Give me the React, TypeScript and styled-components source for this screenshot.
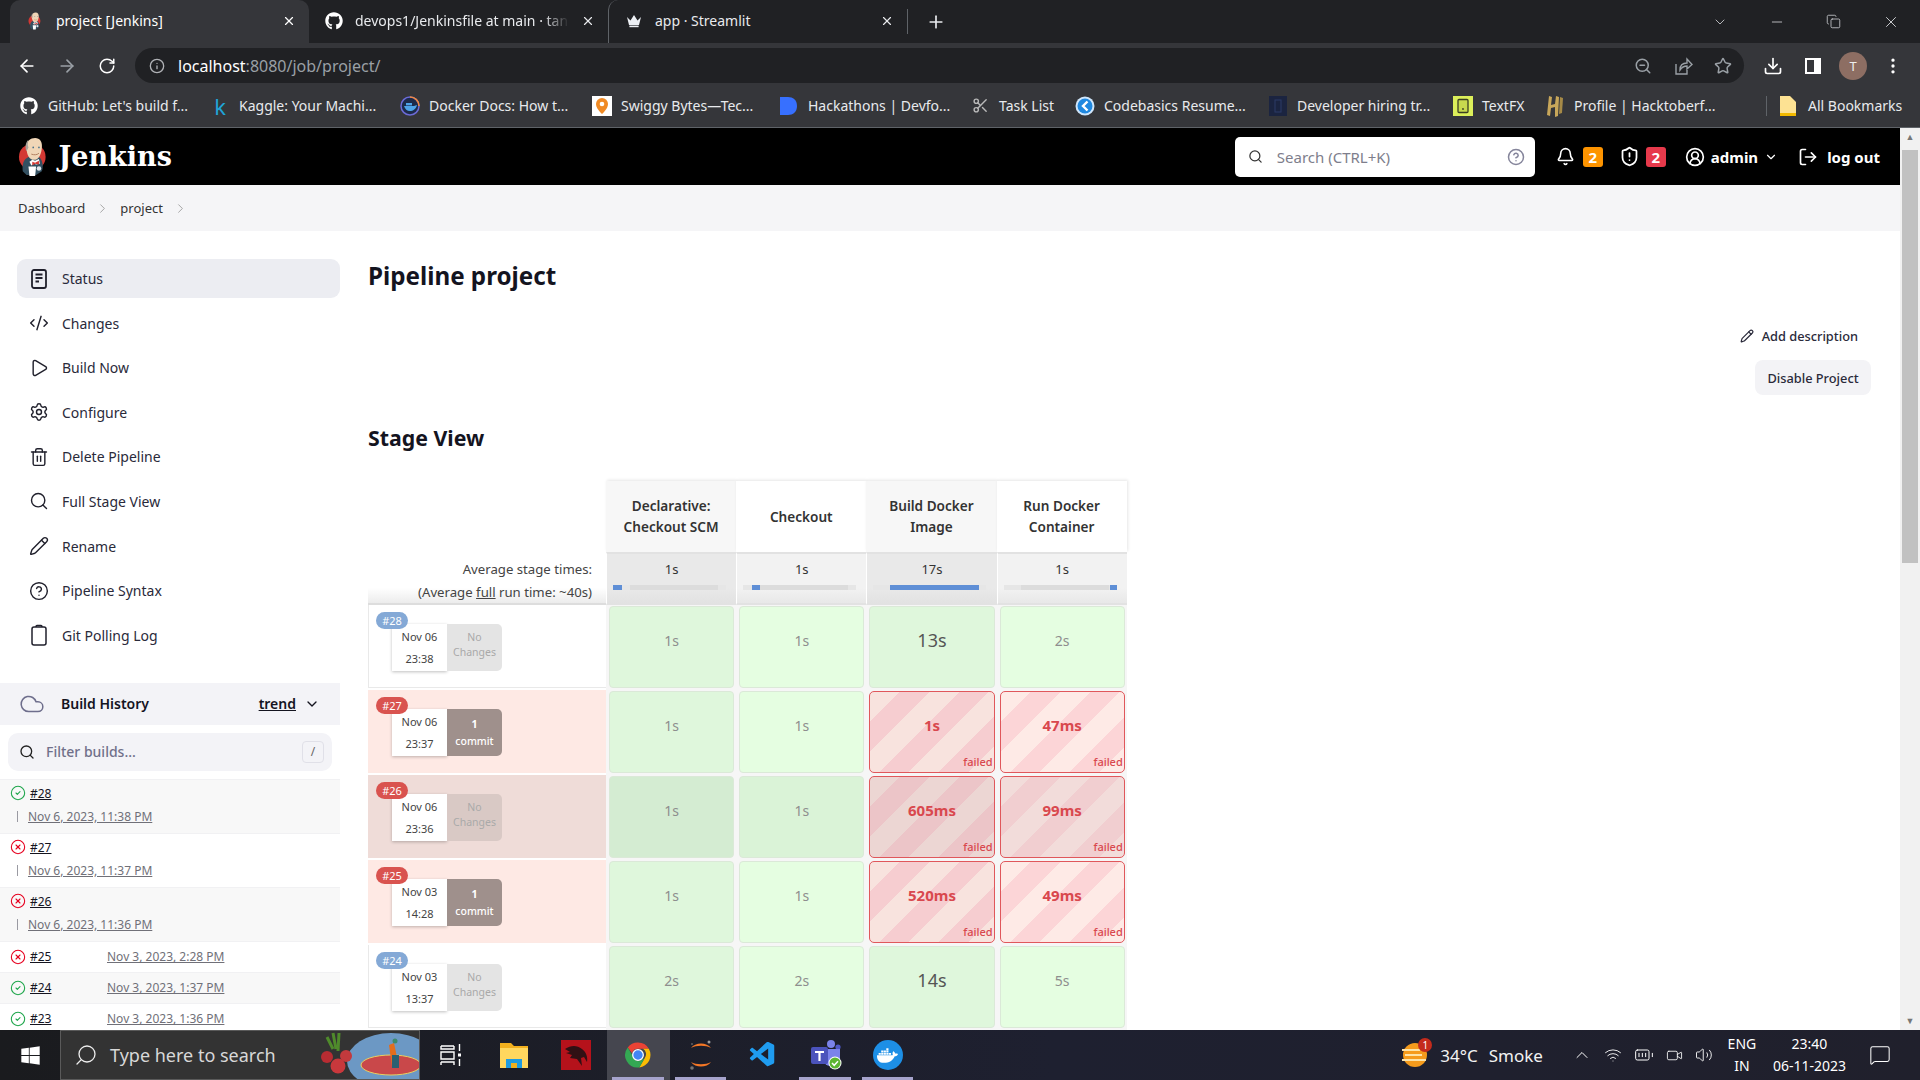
import * as React from 'react';
import styled, { createGlobalStyle } from 'styled-components';
import {
	ArrowLeft,
	ArrowRight,
	Bell,
	BatteryFull,
	ChevronDown,
	ChevronRight,
	ChevronUp,
	CircleCheck,
	CircleHelp,
	CircleUserRound,
	CircleX,
	Cloud,
	CodeXml,
	Download,
	EllipsisVertical,
	Info,
	LogOut,
	MessageSquare,
	Minus,
	Pencil,
	Play,
	Plus,
	RotateCw,
	Scissors,
	Search,
	Settings,
	ShieldAlert,
	Star,
	Trash2,
	Video,
	Volume2,
	Wifi,
	X,
	ZoomOut,
	Copy,
} from 'lucide-react';
import { FaDocker, FaGithub, FaWindows } from 'react-icons/fa';
import { VscVscode } from 'react-icons/vsc';

const bookmarks = [
	{ w: 191, label: "GitHub: Let's build f...", icon: <FaGithub size={18} color='#fff' /> },
	{ w: 190, label: 'Kaggle: Your Machi...', icon: <KaggleIcon /> },
	{ w: 192, label: 'Docker Docs: How t...', icon: <DockerDocsIcon /> },
	{ w: 187, label: 'Swiggy Bytes—Tec...', icon: <SwiggyIcon /> },
	{ w: 191, label: 'Hackathons | Devfo...', icon: <DevfolioIcon /> },
	{ w: 105, label: 'Task List', icon: <Scissors size={17} color='#b9b9b9' /> },
	{ w: 193, label: 'Codebasics Resume...', icon: <CodebasicsIcon /> },
	{ w: 185, label: 'Developer hiring tr...', icon: <DevHiringIcon /> },
	{ w: 92, label: 'TextFX', icon: <TextFxIcon /> },
	{ w: 195, label: 'Profile | Hacktoberf...', icon: <HacktoberIcon /> },
];

const tasks = [
	{ label: 'Status', icon: <StatusDocIcon />, active: true },
	{ label: 'Changes', icon: <CodeXml size={20} strokeWidth={1.7} /> },
	{ label: 'Build Now', icon: <Play size={20} strokeWidth={1.7} /> },
	{ label: 'Configure', icon: <Settings size={20} strokeWidth={1.7} /> },
	{ label: 'Delete Pipeline', icon: <Trash2 size={20} strokeWidth={1.7} /> },
	{ label: 'Full Stage View', icon: <Search size={20} strokeWidth={1.7} /> },
	{ label: 'Rename', icon: <Pencil size={20} strokeWidth={1.7} /> },
	{ label: 'Pipeline Syntax', icon: <CircleHelp size={20} strokeWidth={1.7} /> },
	{ label: 'Git Polling Log', icon: <PollingLogIcon /> },
];

const history = [
	{ id: '#28', date: 'Nov 6, 2023, 11:38 PM', ok: true, wide: true },
	{ id: '#27', date: 'Nov 6, 2023, 11:37 PM', ok: false, wide: true },
	{ id: '#26', date: 'Nov 6, 2023, 11:36 PM', ok: false, wide: true },
	{ id: '#25', date: 'Nov 3, 2023, 2:28 PM', ok: false, wide: false },
	{ id: '#24', date: 'Nov 3, 2023, 1:37 PM', ok: true, wide: false },
	{ id: '#23', date: 'Nov 3, 2023, 1:36 PM', ok: true, wide: false },
];

const stages = [
	{ title: 'Declarative: Checkout SCM', avg: '1s', start: 0, fill: 9 },
	{ title: 'Checkout', avg: '1s', start: 9, fill: 8 },
	{ title: 'Build Docker Image', avg: '17s', start: 17, fill: 89 },
	{ title: 'Run Docker Container', avg: '1s', start: 106, fill: 7 },
];

const runs = [
	{ id: '#28', day: 'Nov 06', time: '23:38', commits: 0, failed: false, hover: false, cells: ['1s', '1s', '13s', '2s'] },
	{ id: '#27', day: 'Nov 06', time: '23:37', commits: 1, failed: true, hover: false, cells: ['1s', '1s', '1s', '47ms'] },
	{ id: '#26', day: 'Nov 06', time: '23:36', commits: 0, failed: true, hover: true, cells: ['1s', '1s', '605ms', '99ms'] },
	{ id: '#25', day: 'Nov 03', time: '14:28', commits: 1, failed: true, hover: false, cells: ['1s', '1s', '520ms', '49ms'] },
	{ id: '#24', day: 'Nov 03', time: '13:37', commits: 0, failed: false, hover: false, cells: ['2s', '2s', '14s', '5s'] },
];

function KaggleIcon() {
	return <KaggleMark>k</KaggleMark>;
}

function JenkinsLogo({ size = 40 }: { size?: number }) {
	return (
		<svg width={(size * 32) / 42} height={size} viewBox='0 0 32 42'>
			<circle cx='15' cy='21' r='14' fill='#d33833' />
			<path d='M5 36c-1-7 1-13 6-15l11 0c4 3 5 10 3 15l-6 4H9z' fill='#335061' />
			<path d='M9 11C9 4 13 1 18 1c5 0 8 4 7 11-1 8-4 12-8 12-5 0-8-5-8-13z' fill='#f0d6b7' />
			<path d='M9 15C7 12 8 5 11 3c-1 3-1 6 0 8z' fill='#a9a39a' />
			<path d='M15 24l3 1 4-2 1 5-4 1-2-1-3 2-2-4z' fill='#fff' />
			<path d='M15 26l3 1 4-2v4l-4-1-3 2z' fill='#d33833' />
			<path d='M11 31h8l-1 10h-6z' fill='#fff' />
			<circle cx='22' cy='33' r='2.4' fill='#dfe5ea' />
			<circle cx='16' cy='11' r='0.9' fill='#49728b' />
			<circle cx='22' cy='11' r='0.9' fill='#49728b' />
			<path d='M14 18c3 1 6 1 8-1' fill='none' stroke='#b07c5c' />
		</svg>
	);
}

function ChromeLogo() {
	return (
		<svg width='30' height='30' viewBox='0 0 48 48'>
			<path d='M24 4a20 20 0 0 1 17.3 10H24a10 10 0 0 0-9.5 7L7.6 11.8A20 20 0 0 1 24 4z' fill='#ea4335' />
			<path d='M41.3 14A20 20 0 0 1 26 43.9L34.6 29A10 10 0 0 0 32 14z' fill='#fbbc04' />
			<path d='M26 43.9A20 20 0 0 1 7.6 11.8L16 26.5A10 10 0 0 0 26 33.9L34.6 29z' fill='#34a853' />
			<circle cx='24' cy='24' r='8.5' fill='#4285f4' stroke='#fff' strokeWidth='2' />
		</svg>
	);
}

function ExplorerLogo() {
	return (
		<svg width='28' height='30' viewBox='0 0 28 30'>
			<path d='M0 3h11l3 3h14v20H0z' fill='#f2b01e' />
			<rect y='8' width='28' height='20' fill='#ffd75e' />
			<path d='M6 28V19h16v9h-5v-5h-6v5z' fill='#1f9be0' />
			<rect x='11' y='23' width='6' height='5' fill='#f2b01e' />
		</svg>
	);
}

function KaliLogo() {
	return (
		<svg width='30' height='30' viewBox='0 0 30 30'>
			<rect width='30' height='30' fill='#b5121b' />
			<path d='M4 9c6-4 12-4 17 0 4 3 6 8 5 13l-3-5-3 1 1 8-5-7-7-1 2-3-6-2 4-1z' fill='#301014' />
		</svg>
	);
}

function JupyterLogo() {
	return (
		<svg width='28' height='32' viewBox='0 0 28 32'>
			<path d='M4 9c4-6 16-6 20 0-5-3-15-3-20 0zM4 23c4 6 16 6 20 0-5 3-15 3-20 0z' fill='#f37726' />
			<circle cx='22' cy='3' r='1.5' fill='#9e9e9e' />
			<circle cx='5' cy='29' r='1.8' fill='#757575' />
			<circle cx='5' cy='5' r='1' fill='#616161' />
		</svg>
	);
}

function TeamsLogo() {
	return (
		<svg width='32' height='30' viewBox='0 0 32 30'>
			<circle cx='21' cy='4' r='4' fill='#7b83eb' />
			<circle cx='28' cy='7' r='2.6' fill='#5059c9' />
			<path d='M14 9h16v11a6 6 0 0 1-6 6h-4a6 6 0 0 1-6-6z' fill='#7b83eb' />
			<rect x='1' y='7' width='17' height='17' rx='2' fill='#4b53bc' />
			<path d='M5 11h9v2h-3.4v8H8.4v-8H5z' fill='#fff' />
			<circle cx='25' cy='23' r='6.5' fill='#fff' />
			<circle cx='25' cy='23' r='5.5' fill='#5cb531' />
			<path d='M22 23l2.2 2.3 3.8-4' fill='none' stroke='#fff' strokeWidth='1.5' />
		</svg>
	);
}

function TaskViewIcon() {
	return (
		<svg width='24' height='24' viewBox='0 0 24 24' fill='none' stroke='#fff' strokeWidth='1.4'>
			<path d='M2 3h13M15 3v3H2V3M2 9h13v7H2zM2 19h13v3M2 19v3' />
			<rect x='19' y='10.5' width='3' height='3' fill='#fff' stroke='none' />
			<path d='M20.5 1v7M20.5 16v7' />
		</svg>
	);
}

function StreamlitCrown() {
	return (
		<svg width='16' height='14' viewBox='0 0 16 14'>
			<path d='M1 3l3.5 3.5L8 1l3.5 5.5L15 3l-2 8H3z' fill='#eceff4' />
			<rect x='3.4' y='11.6' width='9.2' height='1.6' fill='#eceff4' />
		</svg>
	);
}

function ShareIcon() {
	return (
		<svg width='20' height='20' viewBox='0 0 20 20' fill='none' stroke='#9aa0a6' strokeWidth='1.4'>
			<path d='M3 8v10h11v-4' />
			<path d='M7 14c0-5 3-7 7-7V3l5 5.5L14 13V10c-3 0-5 1-7 4z' />
		</svg>
	);
}

function SidePanelIcon() {
	return (
		<svg width='18' height='18' viewBox='0 0 18 18'>
			<rect x='1' y='1' width='16' height='16' fill='#fff' />
			<rect x='3' y='3' width='7' height='12' fill='#35363a' />
		</svg>
	);
}

function StatusDocIcon() {
	return (
		<svg width='20' height='22' viewBox='0 0 20 22' fill='none' stroke='#20202c' strokeWidth='1.8'>
			<rect x='3' y='2' width='14' height='18' rx='2' />
			<path d='M6.5 6.5h7M6.5 10h7M6.5 13.5h3.5' />
		</svg>
	);
}

function PollingLogIcon() {
	return (
		<svg width='20' height='22' viewBox='0 0 20 22' fill='none' stroke='#20202c' strokeWidth='1.5'>
			<rect x='3' y='3' width='14' height='18' rx='2' />
			<path d='M7 3c0-1 .5-1.5 1-1.5h4c.5 0 1 .5 1 1.5' />
		</svg>
	);
}

function DockerDocsIcon() {
	return (
		<svg width='20' height='20' viewBox='0 0 20 20'>
			<circle cx='10' cy='10' r='9' fill='#1d2a4a' stroke='#6b6bd6' strokeWidth='1.5' />
			<path d='M10 1a9 9 0 0 1 9 9' fill='none' stroke='#f0883e' strokeWidth='1.5' />
			<path d='M4 10h10c1 0 2-1 3-1-1 4-4 6-7 6-3 0-5-2-6-5z' fill='#4ea3e8' />
			<rect x='6' y='7' width='6' height='2.4' fill='#4ea3e8' />
		</svg>
	);
}

function SwiggyIcon() {
	return (
		<svg width='20' height='20' viewBox='0 0 20 20'>
			<rect width='20' height='20' fill='#fff' />
			<path d='M10 2a6 6 0 0 1 6 6c0 4-4 8-6 10-2-2-6-6-6-10a6 6 0 0 1 6-6z' fill='#f08a24' />
			<circle cx='10' cy='8' r='2.3' fill='#fff' />
		</svg>
	);
}

function DevfolioIcon() {
	return (
		<svg width='20' height='20' viewBox='0 0 20 20'>
			<path d='M1 1h8c5 0 9 3 9 9s-4 9-9 9H1z' fill='#3770ff' />
		</svg>
	);
}

function CodebasicsIcon() {
	return (
		<svg width='20' height='20' viewBox='0 0 20 20'>
			<circle cx='10' cy='10' r='9.5' fill='#cfe6fb' />
			<circle cx='10' cy='10' r='7.5' fill='#1f88e0' />
			<path d='M12.5 5.5L8 10l4.5 4.5' fill='none' stroke='#fff' strokeWidth='2.4' />
		</svg>
	);
}

function DevHiringIcon() {
	return (
		<svg width='20' height='20' viewBox='0 0 20 20'>
			<rect x='1' width='18' height='20' fill='#1b2440' />
			<rect x='7' y='4' width='6' height='12' fill='none' stroke='#2c3a66' />
		</svg>
	);
}

function TextFxIcon() {
	return (
		<svg width='20' height='20' viewBox='0 0 20 20'>
			<rect width='20' height='20' fill='#dcef5a' />
			<rect x='5' y='3.5' width='10' height='13' rx='1' fill='#c8d94e' stroke='#3a3f22' strokeWidth='1.3' />
			<circle cx='10' cy='13' r='0.9' fill='#3a3f22' />
		</svg>
	);
}

function HacktoberIcon() {
	return (
		<svg width='20' height='22' viewBox='0 0 20 22'>
			<path d='M4 1l3 1-1 8 4-1 1-8 3 1-1 19-3 1 0-10-4 1-1 8-3-1z' fill='#c8a75a' />
			<path d='M15 2l3 1-1 15-3 1z' fill='#a68a47' />
		</svg>
	);
}

function FolderIcon() {
	return (
		<svg width='18' height='20' viewBox='0 0 18 20'>
			<path d='M1 0h10l6 6v14H1z' fill='#fde293' />
			<path d='M1 17h16v3H1z' fill='#f2b900' />
		</svg>
	);
}

function WeatherIcon() {
	return (
		<WeatherWrap>
			<svg width='26' height='26' viewBox='0 0 26 26'>
				<circle cx='13' cy='13' r='12' fill='#f59b1c' />
				<path d='M0 8h18M3 13h17M0 18h24' stroke='#fde3a7' strokeWidth='2' />
			</svg>
			<WeatherBadge>1</WeatherBadge>
		</WeatherWrap>
	);
}

function SearchArt() {
	return (
		<svg width='100' height='48' viewBox='0 0 100 48'>
			<ellipse cx='72' cy='30' rx='44' ry='28' fill='#6c98c4' />
			<ellipse cx='72' cy='34' rx='30' ry='10' fill='#c9484a' stroke='#e9cf5f' />
			<path d='M70 14l5-2 5 24h-7z' fill='#e36d1d' />
			<rect x='73' y='24' width='7' height='13' fill='#2a6072' />
			<circle cx='76' cy='10' r='2.5' fill='#3d8b6d' />
			<path d='M14 2l3 16M20 2l-1 18M8 6l6 12' stroke='#4f8a2b' strokeWidth='3' />
			<circle cx='8' cy='26' r='6' fill='#b82c32' />
			<circle cx='27' cy='25' r='6' fill='#c33a3d' />
			<circle cx='19' cy='35' r='7.5' fill='#c9383c' />
		</svg>
	);
}

function StatusIcon({ ok }: { ok: boolean }) {
	return ok ? <CircleCheck size={16} color='#1ea64b' strokeWidth={1.6} /> : <CircleX size={16} color='#e6001f' strokeWidth={1.6} />;
}

function App() {
	return (
		<>
			<GlobalStyle />
			<Screen>
				<TabStrip>
					<Tab $active>
						<Favicon>
							<JenkinsLogo size={18} />
						</Favicon>
						<TabTitle>project [Jenkins]</TabTitle>
						<X size={14} />
					</Tab>
					<Tab>
						<Favicon>
							<FaGithub size={18} color='#fff' />
						</Favicon>
						<TabTitle $fade>devops1/Jenkinsfile at main · tan</TabTitle>
						<X size={14} />
					</Tab>
					<Tab $divided>
						<Favicon>
							<StreamlitCrown />
						</Favicon>
						<TabTitle>app · Streamlit</TabTitle>
						<X size={14} />
					</Tab>
					<NewTab>
						<Plus size={20} />
					</NewTab>
					<WindowControls>
						<ChevronDown size={16} strokeWidth={1.2} />
						<Minus size={16} strokeWidth={1.2} />
						<Copy size={15} strokeWidth={1.2} />
						<X size={18} strokeWidth={1.2} />
					</WindowControls>
				</TabStrip>

				<Toolbar>
					<NavButton>
						<ArrowLeft size={20} />
					</NavButton>
					<NavButton $dim>
						<ArrowRight size={20} />
					</NavButton>
					<NavButton>
						<RotateCw size={18} />
					</NavButton>
					<AddressBar>
						<Info size={16} color='#b0b2b6' />
						<Url>
							localhost<UrlRest>:8080/job/project/</UrlRest>
						</Url>
						<AddressActions>
							<NavButton $dim>
								<ZoomOut size={18} />
							</NavButton>
							<NavButton $dim>
								<ShareIcon />
							</NavButton>
							<NavButton $dim>
								<Star size={18} />
							</NavButton>
						</AddressActions>
					</AddressBar>
					<NavButton>
						<Download size={20} />
					</NavButton>
					<NavButton>
						<SidePanelIcon />
					</NavButton>
					<NavButton>
						<Avatar>T</Avatar>
					</NavButton>
					<NavButton>
						<EllipsisVertical size={20} />
					</NavButton>
				</Toolbar>

				<BookmarkBar>
					{bookmarks.map((bookmark) => (
						<Bookmark key={bookmark.label} $w={bookmark.w}>
							<BookmarkIcon>{bookmark.icon}</BookmarkIcon>
							{bookmark.label}
						</Bookmark>
					))}
					<AllBookmarks>
						<FolderIcon />
						All Bookmarks
					</AllBookmarks>
				</BookmarkBar>

				<Viewport>
					<Page>
						<Header>
							<JenkinsLogo size={40} />
							<Brand>Jenkins</Brand>
							<HeaderRight>
								<SearchBox>
									<Search size={15} color='#333' />
									<SearchHint>Search (CTRL+K)</SearchHint>
									<CircleHelp size={18} color='#85859b' />
								</SearchBox>
								<HeaderAlert $gap={8} $after={16}>
									<Bell size={19} />
									<CountBadge $color='#fe9400'>2</CountBadge>
								</HeaderAlert>
								<HeaderAlert $gap={6} $after={19}>
									<ShieldAlert size={21} />
									<CountBadge $color='#e6394b'>2</CountBadge>
								</HeaderAlert>
								<HeaderUser>
									<CircleUserRound size={20} />
									admin
									<ChevronDown size={14} />
								</HeaderUser>
								<HeaderLogout>
									<LogOut size={20} />
									log out
								</HeaderLogout>
							</HeaderRight>
						</Header>

						<Breadcrumbs>
							Dashboard
							<ChevronRight size={15} strokeWidth={1} />
							project
							<ChevronRight size={15} strokeWidth={1} />
						</Breadcrumbs>

						<Body>
							<Sidebar>
								<TaskList>
									{tasks.map((task) => (
										<Task key={task.label} $active={task.active}>
											<TaskIcon>{task.icon}</TaskIcon>
											{task.label}
										</Task>
									))}
								</TaskList>

								<HistoryHead>
									<Cloud size={26} color='#6e6e8c' strokeWidth={1.4} />
									<HistoryTitle>Build History</HistoryTitle>
									<TrendLink>trend</TrendLink>
									<ChevronDown size={16} />
								</HistoryHead>

								<FilterBox>
									<Search size={16} color='#222' />
									<FilterHint>Filter builds...</FilterHint>
									<SlashKey>/</SlashKey>
								</FilterBox>

								<HistoryList>
									{history.map((build) => (
										<HistoryRow key={build.id} $wide={build.wide}>
											<StatusIcon ok={build.ok} />
											<BuildLink>{build.id}</BuildLink>
											<BuildDate $wide={build.wide}>{build.date}</BuildDate>
										</HistoryRow>
									))}
								</HistoryList>
							</Sidebar>

							<Main>
								<Title>Pipeline project</Title>
								<Actions>
									<AddDescription>
										<Pencil size={14} />
										Add description
									</AddDescription>
									<DisableButton>Disable Project</DisableButton>
								</Actions>
								<SectionTitle>Stage View</SectionTitle>

								<StageTable>
									<CornerCell />
									{stages.map((stage, index) => (
										<StageHead key={stage.title} $odd={index % 2 === 0}>
											{stage.title}
										</StageHead>
									))}

									<AverageLabel>
										<span>Average stage times:</span>
										<span>
											(Average <u>full</u> run time: ~40s)
										</span>
									</AverageLabel>
									{stages.map((stage, index) => (
										<AverageCell key={stage.title} $odd={index % 2 === 0}>
											{stage.avg}
											<AverageBar>
												<AverageFill style={{ marginLeft: stage.start, width: stage.fill }} />
											</AverageBar>
										</AverageCell>
									))}

									{runs.map((run) => (
										<React.Fragment key={run.id}>
											<RunCell $failed={run.failed} $hover={run.hover}>
												<RunBadge $failed={run.failed}>{run.id}</RunBadge>
												<RunCard>
													<RunDate>
														<span>{run.day}</span>
														<span>{run.time}</span>
													</RunDate>
													{run.commits > 0 ? (
														<RunCommits>
															<strong>{run.commits}</strong>
															<span>commit</span>
														</RunCommits>
													) : (
														<RunEmpty $hover={run.hover}>
															<span>No</span>
															<span>Changes</span>
														</RunEmpty>
													)}
												</RunCard>
											</RunCell>
											{run.cells.map((value, index) => {
												let failed = run.failed && index > 1;
												return (
													<CellSlot key={index}>
														{failed ? (
															<FailedCell $odd={index === 2} $hover={run.hover}>
																{value}
																<FailedTag>failed</FailedTag>
															</FailedCell>
														) : (
															<PassedCell $odd={index % 2 === 0} $hover={run.hover} $large={index === 2}>
																{value}
															</PassedCell>
														)}
													</CellSlot>
												);
											})}
										</React.Fragment>
									))}
								</StageTable>
							</Main>
						</Body>
					</Page>
					<ScrollTrack>
						<ScrollArrow>▲</ScrollArrow>
						<ScrollThumb />
						<ScrollArrow $bottom>▼</ScrollArrow>
					</ScrollTrack>
				</Viewport>

				<Taskbar>
					<StartButton>
						<FaWindows size={21} color='#fff' />
					</StartButton>
					<TaskSearch>
						<MirroredSearch>
							<Search size={24} strokeWidth={1.3} color='#eee' />
						</MirroredSearch>
						<TaskSearchText>Type here to search</TaskSearchText>
						<SearchArt />
					</TaskSearch>
					<TaskApps>
						<TaskApp>
							<TaskViewIcon />
						</TaskApp>
						<TaskApp>
							<ExplorerLogo />
						</TaskApp>
						<TaskApp>
							<KaliLogo />
						</TaskApp>
						<TaskApp $active $running>
							<ChromeLogo />
						</TaskApp>
						<TaskApp $running>
							<JupyterLogo />
						</TaskApp>
						<TaskApp>
							<VscVscode size={30} color='#1f9cf0' />
						</TaskApp>
						<TaskApp $running>
							<TeamsLogo />
						</TaskApp>
						<TaskApp $running>
							<DockerCircle>
								<FaDocker size={21} color='#fff' />
							</DockerCircle>
						</TaskApp>
					</TaskApps>
					<Tray>
						<WeatherIcon />
						<WeatherText>34°C</WeatherText>
						<WeatherText>Smoke</WeatherText>
						<TrayIcons>
							<ChevronUp size={20} strokeWidth={1.2} />
							<Wifi size={18} strokeWidth={1.2} />
							<BatteryFull size={20} strokeWidth={1.2} />
							<Video size={17} strokeWidth={1.2} />
							<Volume2 size={18} strokeWidth={1.2} />
						</TrayIcons>
						<TrayLang>
							<span>ENG</span>
							<span>IN</span>
						</TrayLang>
						<TrayClock>
							<span>23:40</span>
							<span>06-11-2023</span>
						</TrayClock>
						<MessageSquare size={22} strokeWidth={1.1} color='#fff' />
					</Tray>
				</Taskbar>
			</Screen>
		</>
	);
}

export default App;

var GlobalStyle = createGlobalStyle`
	html,
	body {
		margin: 0;
		height: 100%;
		overflow: hidden;
		background: #fff;
		font-family: 'Noto Sans', 'Liberation Sans', sans-serif;
	}
`;

var Screen = styled.div`
	display: flex;
	flex-direction: column;
	width: 1920px;
	height: 1080px;
	overflow: hidden;
`;

var TabStrip = styled.div`
	display: flex;
	flex: none;
	height: 43px;
	padding-left: 10px;
	background: #202124;
	color: #e8eaed;
`;

var Tab = styled.div<{ $active?: boolean; $divided?: boolean }>`
	display: flex;
	align-items: center;
	gap: 12px;
	width: 299px;
	padding: 0 13px 2px 16px;
	box-sizing: border-box;
	font-size: 14px;
	color: ${(p) => (p.$active ? '#fff' : '#e8eaed')};
	background: ${(p) => (p.$active ? '#35363a' : 'transparent')};
	border-radius: 10px 10px 0 0;
	border-left: ${(p) => (p.$divided ? '1px solid #5f6368' : '0')};
`;

var Favicon = styled.div`
	display: flex;
	flex: none;
	justify-content: center;
	width: 18px;
`;

var TabTitle = styled.span<{ $fade?: boolean }>`
	flex: 1;
	overflow: hidden;
	white-space: nowrap;
	${(p) => p.$fade && 'mask-image: linear-gradient(90deg, #000 88%, transparent);'}
`;

var NewTab = styled.div`
	display: flex;
	align-items: center;
	justify-content: center;
	width: 56px;
	border-left: 1px solid #5f6368;
	margin: 9px 0;
`;

var WindowControls = styled.div`
	display: flex;
	align-items: center;
	justify-content: space-between;
	width: 188px;
	margin-left: auto;
	padding-right: 20px;
	color: #dadce0;
`;

var Toolbar = styled.div`
	display: flex;
	flex: none;
	box-sizing: border-box;
	height: 45px;
	padding: 5px 7px 0;
	background: #35363a;
	color: #fff;
`;

var NavButton = styled.div<{ $dim?: boolean }>`
	display: flex;
	flex: none;
	align-items: center;
	justify-content: center;
	width: 40px;
	height: 35px;
	color: ${(p) => (p.$dim ? '#9aa0a6' : '#fff')};
`;

var AddressBar = styled.div`
	display: flex;
	flex: 1;
	align-items: center;
	gap: 13px;
	height: 35px;
	margin: 0 9px 0 8px;
	padding-left: 14px;
	border-radius: 18px;
	background: #202124;
`;

var Url = styled.span`
	font-size: 16px;
	color: #fff;
`;

var UrlRest = styled.span`
	color: #9aa0a6;
`;

var AddressActions = styled.div`
	display: flex;
	margin-left: auto;
	padding-right: 1px;
`;

var Avatar = styled.div`
	display: flex;
	align-items: center;
	justify-content: center;
	width: 28px;
	height: 28px;
	border-radius: 50%;
	background: #8d6e63;
	font-size: 13px;
	color: #eee;
`;

var BookmarkBar = styled.div`
	display: flex;
	flex: none;
	align-items: center;
	box-sizing: border-box;
	height: 40px;
	padding: 0 0 4px 19px;
	background: #35363a;
	border-bottom: 1px solid #5f6368;
	color: #e8eaed;
	font-size: 14px;
`;

var Bookmark = styled.div<{ $w: number }>`
	display: flex;
	flex: none;
	align-items: center;
	gap: 9px;
	width: ${(p) => p.$w}px;
	white-space: nowrap;
`;

var BookmarkIcon = styled.span`
	display: flex;
	flex: none;
	justify-content: center;
	width: 20px;
`;

var KaggleMark = styled.span`
	font-size: 22px;
	line-height: 20px;
	color: #20a4d8;
`;

var AllBookmarks = styled.div`
	display: flex;
	align-items: center;
	gap: 11px;
	margin-left: 26px;
	padding-left: 12px;
	border-left: 1px solid #5f6368;
	white-space: nowrap;
`;

var Viewport = styled.div`
	display: flex;
	flex: 1;
	min-height: 0;
`;

var Page = styled.div`
	flex: 1;
	min-width: 0;
	overflow: hidden;
`;

var ScrollTrack = styled.div`
	display: flex;
	flex: none;
	flex-direction: column;
	width: 20px;
	background: #f1f1f1;
`;

var ScrollArrow = styled.div<{ $bottom?: boolean }>`
	height: 18px;
	margin-top: ${(p) => (p.$bottom ? 'auto' : '0')};
	font-size: 9px;
	line-height: 18px;
	text-align: center;
	color: #777;
`;

var ScrollThumb = styled.div`
	height: 413px;
	margin: 4px 2px 0;
	background: #c1c1c1;
`;

var Header = styled.header`
	display: flex;
	align-items: center;
	height: 57px;
	padding: 0 20px 0 18px;
	background: #000;
	color: #fff;
`;

var Brand = styled.span`
	margin-left: 10px;
	font-family: 'DejaVu Serif', 'Liberation Serif', serif;
	font-size: 27px;
	font-weight: 700;
`;

var HeaderRight = styled.div`
	display: flex;
	align-items: center;
	margin-left: auto;
	font-size: 15px;
	font-weight: 700;
`;

var SearchBox = styled.div`
	display: flex;
	align-items: center;
	gap: 14px;
	box-sizing: border-box;
	width: 300px;
	height: 40px;
	padding: 0 10px 0 13px;
	margin-right: 21px;
	border-radius: 5px;
	background: #fff;
`;

var SearchHint = styled.span`
	flex: 1;
	font-size: 15px;
	font-weight: 400;
	color: #7e7e8c;
`;

var HeaderAlert = styled.div<{ $gap: number; $after: number }>`
	display: flex;
	align-items: center;
	gap: ${(p) => p.$gap}px;
	margin-right: ${(p) => p.$after}px;
`;

var CountBadge = styled.span<{ $color: string }>`
	width: 20px;
	height: 20px;
	border-radius: 3px;
	line-height: 20px;
	text-align: center;
	font-size: 15px;
	background: ${(p) => p.$color};
`;

var HeaderUser = styled.div`
	display: flex;
	align-items: center;
	gap: 6px;
	margin-right: 20px;
`;

var HeaderLogout = styled.div`
	display: flex;
	align-items: center;
	gap: 9px;
`;

var Breadcrumbs = styled.nav`
	display: flex;
	align-items: center;
	gap: 10px;
	height: 46px;
	padding-left: 18px;
	background: #f5f5f7;
	color: #333;
	font-size: 13px;

	svg {
		color: #777;
	}
`;

var Body = styled.div`
	display: flex;
	gap: 28px;
`;

var Sidebar = styled.aside`
	flex: none;
	width: 340px;
	padding-top: 28px;
`;

var TaskList = styled.div`
	display: grid;
	gap: 5.6px;
	padding-left: 17px;
`;

var Task = styled.div<{ $active?: boolean }>`
	display: flex;
	align-items: center;
	height: 39px;
	padding-left: 12px;
	border-radius: 9px;
	background: ${(p) => (p.$active ? '#ecedf2' : 'transparent')};
	color: #2a2a3a;
	font-size: 14px;
`;

var TaskIcon = styled.span`
	display: flex;
	justify-content: center;
	width: 20px;
	margin-right: 13px;
	color: #20202c;
`;

var HistoryHead = styled.div`
	display: flex;
	align-items: center;
	height: 42px;
	margin-top: 28px;
	padding: 0 20px 0 19px;
	background: #f3f3f7;
	color: #14141f;
	font-size: 14px;
	font-weight: 600;
`;

var HistoryTitle = styled.span`
	flex: 1;
	margin-left: 16px;
`;

var TrendLink = styled.span`
	margin-right: 8px;
	text-decoration: underline;
`;

var FilterBox = styled.div`
	display: flex;
	align-items: center;
	height: 38px;
	margin: 8px 8px 8px;
	padding: 0 8px 0 11px;
	border-radius: 10px;
	background: #f3f3f7;
`;

var FilterHint = styled.span`
	flex: 1;
	margin-left: 11px;
	font-size: 14px;
	font-weight: 500;
	color: #70708a;
`;

var SlashKey = styled.span`
	width: 20px;
	height: 20px;
	border: 1px solid #e0e0e8;
	border-radius: 4px;
	line-height: 20px;
	text-align: center;
	font-size: 12px;
	color: #666;
`;

var HistoryList = styled.div``;

var HistoryRow = styled.div<{ $wide: boolean }>`
	display: grid;
	grid-template-columns: 16px 81px auto;
	align-items: center;
	box-sizing: border-box;
	height: ${(p) => (p.$wide ? '54px' : '31px')};
	padding-left: 10px;
	border-top: 1px solid #f1f1f3;
	font-size: 12px;
	align-content: ${(p) => (p.$wide ? 'start' : 'center')};
	padding-top: ${(p) => (p.$wide ? '5px' : '0')};

	&:nth-child(odd) {
		background: #f8f8f8;
	}
`;

var BuildLink = styled.span`
	margin-left: 4px;
	color: #14141f;
	text-decoration: underline;
`;

var BuildDate = styled.span<{ $wide: boolean }>`
	color: #707078;
	text-decoration: underline;
	white-space: nowrap;
	${(p) =>
		p.$wide &&
		`
		grid-column: 1 / -1;
		margin-top: 6px;
		margin-left: 7px;
		padding-left: 11px;
		background: linear-gradient(#9a9aa2, #9a9aa2) 0 50% / 1px 11px no-repeat;
	`}
`;

var Main = styled.main`
	flex: 1;
	min-width: 0;
	padding: 28px 29px 0 0;
`;

var Title = styled.h1`
	margin: 0;
	font-size: 24.2px;
	line-height: 34px;
	font-weight: 700;
	color: #14141f;
`;

var Actions = styled.div`
	display: flex;
	flex-direction: column;
	align-items: flex-end;
	gap: 14px;
	margin-top: 33px;
`;

var AddDescription = styled.div`
	display: flex;
	align-items: center;
	gap: 8px;
	height: 20px;
	margin-right: 13px;
	font-size: 12.8px;
	font-weight: 500;
	color: #2a2a3a;
`;

var DisableButton = styled.div`
	display: flex;
	align-items: center;
	justify-content: center;
	width: 116px;
	height: 35px;
	border-radius: 8px;
	background: #f3f3f6;
	font-size: 12.8px;
	font-weight: 500;
	color: #2a2a3a;
`;

var SectionTitle = styled.h2`
	margin: 28px 0 28px;
	font-size: 21.3px;
	line-height: 30px;
	font-weight: 700;
	color: #14141f;
`;

var StageTable = styled.div`
	display: grid;
	grid-template-columns: 238px repeat(4, 130.2px);
	grid-template-rows: 71px 53px;
	grid-auto-rows: 85px;
	width: max-content;
	color: #333;
`;

var CornerCell = styled.div``;

var StageHead = styled.div<{ $odd: boolean }>`
	display: flex;
	align-items: center;
	justify-content: center;
	padding: 0 12px 1px;
	background: ${(p) => (p.$odd ? '#f7f7f7' : '#fff')};
	box-shadow: 1px -1px 3px rgba(0, 0, 0, 0.1);
	text-align: center;
	font-size: 13.6px;
	line-height: 21px;
	font-weight: 600;
`;

var AverageLabel = styled.div`
	display: flex;
	flex-direction: column;
	align-items: flex-end;
	justify-content: center;
	gap: 5px;
	padding: 5px 14px 0 0;
	border-bottom: 2px solid #ddd;
	background: linear-gradient(#fff 70%, #ececec);
	font-size: 13.2px;
	line-height: 18px;
	color: #444;
`;

var AverageCell = styled.div<{ $odd: boolean }>`
	display: flex;
	flex-direction: column;
	align-items: center;
	padding-top: 6px;
	border-top: 2px solid #e2e2e2;
	border-bottom: 2px solid #e2e2e2;
	border-left: 1px solid #fff;
	box-sizing: border-box;
	background: ${(p) => (p.$odd ? 'linear-gradient(#e9e9e9 70%, #e2e2e2)' : 'linear-gradient(#f2f2f2 70%, #e8e8e8)')};
	font-size: 13px;
	line-height: 18px;
`;

var AverageBar = styled.div`
	display: flex;
	align-self: flex-start;
	width: 113px;
	height: 5px;
	margin: 7px 0 0 6px;
	background: linear-gradient(90deg, #e6e6e6 0 17px, #dcdcdc 17px 105px, #e6e6e6 105px);
`;

var AverageFill = styled.div`
	height: 100%;
	background: #5f8fd6;
`;

var RunCell = styled.div<{ $failed: boolean; $hover: boolean }>`
	position: relative;
	padding: 19px 0 0 23px;
	margin-bottom: 2px;
	border: 1px solid ${(p) => (p.$hover ? '#efdcd8' : p.$failed ? '#fde9e4' : '#e9e9e9')};
	border-width: 0 0 1px 1px;
	background: ${(p) => (p.$hover ? '#efdcd8' : p.$failed ? '#fee9e4' : '#fff')};
`;

var RunBadge = styled.span<{ $failed: boolean }>`
	position: absolute;
	top: 7px;
	left: 7px;
	z-index: 1;
	width: 32px;
	height: 17px;
	border-radius: 9px;
	background: ${(p) => (p.$failed ? '#d9534f' : '#84a9d6')};
	color: #fff;
	font-size: 11px;
	line-height: 17px;
	text-align: center;
`;

var RunCard = styled.div`
	display: flex;
	width: 110px;
	height: 47px;
`;

var RunDate = styled.div`
	display: flex;
	flex-direction: column;
	align-items: center;
	justify-content: center;
	gap: 7px;
	width: 55px;
	background: #fff;
	box-shadow: 0 1px 3px rgba(0, 0, 0, 0.25);
	font-size: 11px;
	line-height: 15px;
	color: #444;
`;

var RunEmpty = styled.div<{ $hover: boolean }>`
	display: flex;
	flex-direction: column;
	align-items: center;
	justify-content: center;
	padding-bottom: 6px;
	line-height: 15px;
	flex: 1;
	border-radius: 0 5px 5px 0;
	background: ${(p) => (p.$hover ? '#d9c9c5' : '#e4e4e4')};
	font-size: 10.5px;
	color: #a9a9a9;
`;

var RunCommits = styled.div`
	display: flex;
	flex-direction: column;
	align-items: center;
	justify-content: center;
	gap: 2px;
	line-height: 15px;
	flex: 1;
	border-radius: 0 5px 5px 0;
	background: #9f908c;
	font-size: 10.5px;
	font-weight: 500;
	color: #fff;
`;

var CellSlot = styled.div`
	display: flex;
	padding: 1px 2px 2px 3px;
	background: #f6f6f6;
`;

var PassedCell = styled.div<{ $odd: boolean; $hover: boolean; $large: boolean }>`
	display: flex;
	flex: 1;
	align-items: center;
	justify-content: center;
	padding-bottom: 14px;
	border: 1px solid #dbe9d8;
	border-radius: 4px;
	background: ${(p) => (p.$hover ? (p.$odd ? '#d4ecd2' : '#daf3d7') : p.$odd ? '#dff7dc' : '#e5fee1')};
	font-size: ${(p) => (p.$large ? '18px' : '14px')};
	color: ${(p) => (p.$large ? '#555' : '#8e8e8e')};
`;

var FailedCell = styled.div<{ $odd: boolean; $hover: boolean }>`
	position: relative;
	display: flex;
	flex: 1;
	align-items: center;
	justify-content: center;
	padding-bottom: 14px;
	border: 1.5px solid #e0575b;
	border-radius: 5px;
	background: repeating-linear-gradient(
		135deg,
		${(p) => (p.$hover ? (p.$odd ? '#ecd6d3' : '#f2dcda') : p.$odd ? '#f8e3de' : '#feeae6')} 0 21px,
		${(p) => (p.$hover ? (p.$odd ? '#ecc5c8' : '#f1ced0') : p.$odd ? '#f6cdd0' : '#fcd5d7')} 21px 42px
	);
	font-size: 15px;
	font-weight: 700;
	color: #d9484e;
`;

var FailedTag = styled.span`
	position: absolute;
	right: 1px;
	bottom: 3px;
	font-size: 11px;
	font-weight: 500;
	line-height: 14px;
`;

var Taskbar = styled.footer`
	display: flex;
	flex: none;
	height: 50px;
	background: linear-gradient(90deg, #1a1b1e, #1e2030 55%, #20202c);
	color: #fff;
`;

var StartButton = styled.div`
	display: flex;
	flex: none;
	align-items: center;
	justify-content: center;
	width: 60px;
`;

var TaskSearch = styled.div`
	display: flex;
	flex: none;
	align-items: center;
	box-sizing: border-box;
	width: 360px;
	padding-left: 13px;
	border: 1px solid #5a5a5a;
	background: #333;
	overflow: hidden;
`;

var MirroredSearch = styled.span`
	display: flex;
	transform: scaleX(-1);
`;

var TaskSearchText = styled.span`
	flex: 1;
	margin-left: 12px;
	font-size: 18px;
	color: #d8d8d8;
`;

var TaskApps = styled.div`
	display: flex;
`;

var TaskApp = styled.div<{ $active?: boolean; $running?: boolean }>`
	position: relative;
	display: flex;
	align-items: center;
	justify-content: center;
	width: 62.4px;
	background: ${(p) => (p.$active ? '#45464f' : 'transparent')};

	&::after {
		content: '';
		display: ${(p) => (p.$running ? 'block' : 'none')};
		position: absolute;
		left: 5px;
		right: 6px;
		bottom: 0;
		height: 3px;
		background: #a6a3cc;
	}
`;

var DockerCircle = styled.div`
	display: flex;
	align-items: center;
	justify-content: center;
	width: 30px;
	height: 30px;
	border-radius: 50%;
	background: #1d8fe6;
`;

var Tray = styled.div`
	display: flex;
	align-items: center;
	margin-left: auto;
	padding-right: 29px;
`;

var WeatherWrap = styled.div`
	position: relative;
	display: flex;
	margin-right: 12px;
`;

var WeatherBadge = styled.span`
	position: absolute;
	top: -4px;
	right: -4px;
	width: 14px;
	height: 14px;
	border-radius: 50%;
	background: #c42b1c;
	font-size: 10px;
	line-height: 14px;
	text-align: center;
`;

var WeatherText = styled.span`
	margin-right: 11px;
	font-size: 17px;
	color: #f2f2f2;
`;

var TrayIcons = styled.div`
	display: flex;
	align-items: center;
	gap: 12px;
	margin: 0 12px 0 18px;
`;

var TrayLang = styled.div`
	display: flex;
	flex-direction: column;
	align-items: center;
	gap: 4px;
	width: 34px;
	font-size: 14px;
	line-height: 18px;
`;

var TrayClock = styled.div`
	display: flex;
	flex-direction: column;
	align-items: center;
	gap: 4px;
	margin: 0 23px 0 14px;
	font-size: 14px;
	line-height: 18px;
`;
